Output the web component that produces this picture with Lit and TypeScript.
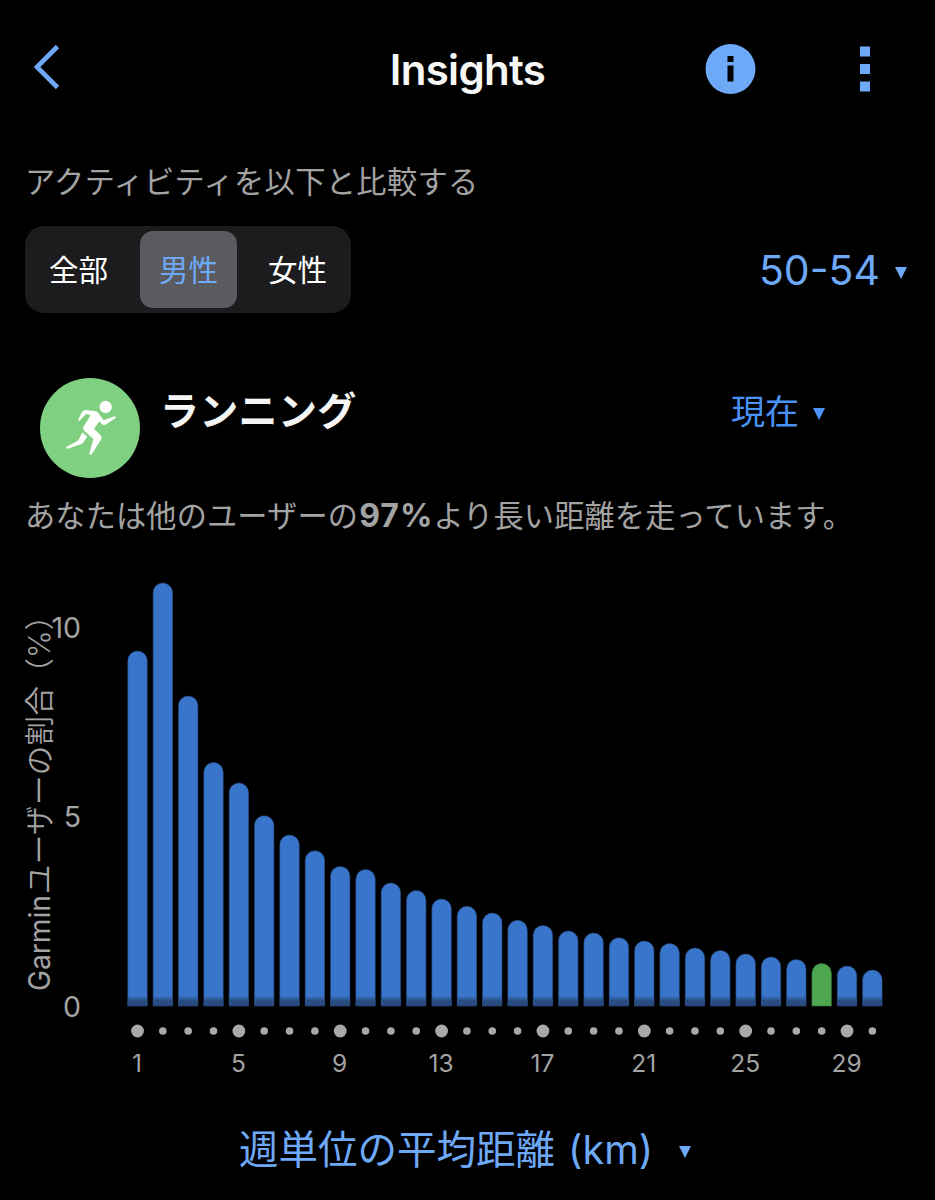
import { LitElement, html, svg, css } from "lit";
import { customElement, property, state } from "lit/decorators.js";

const BASELINE = 446;
const BAR_PITCH = 25.34;
const FIRST_BAR = 137.5;
const BAR_HEIGHTS = [
  355, 423, 310, 243.5, 223, 190.3, 171, 155.3, 139.5, 136.5, 123, 115.5, 107,
  99.7, 93, 85.7, 80.5, 75, 73, 68.3, 65, 62.5, 58, 55.5, 52, 49, 46.5, 42.5,
  40, 36,
];
const USER_BUCKET = 28;

@customElement("drop-caret")
class DropCaret extends LitElement {
  static styles = css`
    :host { display: block; }
    svg { display: block; }
  `;
  render() {
    return html`<svg width="12" height="12" viewBox="0 0 12 12">
      <path d="M0 0H12L6 12Z" fill="currentColor" />
    </svg>`;
  }
}

@customElement("distance-chart")
class DistanceChart extends LitElement {
  @property({ type: Array }) heights: number[] = [];
  @property({ type: Number }) highlight = 0;

  static styles = css`
    :host { display: block; }
    svg { display: block; font-family: Inter, "Noto Sans CJK JP", sans-serif; }
    .bar { fill: #3975cb; stroke: #2a4c80; stroke-width: 0.6; }
    .bar.mine { fill: #4fa650; stroke: #3b7a3c; }
    .dot { fill: #a9a9a9; }
    .tick { fill: #a3a3a3; font-size: 24.5px; text-anchor: middle; }
    .scale { fill: #a3a3a3; font-size: 28.5px; text-anchor: end; }
    .axis { fill: #a3a3a3; font-size: 29.5px; }
    .axis.light { font-weight: 350; }
  `;

  bar(h: number, i: number) {
    const x = FIRST_BAR + i * BAR_PITCH - 9.7;
    const y = BASELINE - h;
    const mine = i + 1 === this.highlight;
    return svg`
      <path class=${mine ? "bar mine" : "bar"}
        d="M${x} ${BASELINE}V${y + 9.7}a9.7 9.7 0 0 1 19.4 0V${BASELINE}Z" />
      ${mine ? null : svg`<rect x=${x} y=${BASELINE - 10} width="19.4" height="10" fill="url(#foot)" />`}`;
  }

  mark(i: number) {
    const x = FIRST_BAR + i * BAR_PITCH;
    const major = i % 4 === 0;
    return svg`
      <circle class="dot" cx=${x} cy="471" r=${major ? 6.4 : 3.8} />
      ${major ? svg`<text class="tick" x=${x - 0.5} y="512">${i + 1}</text>` : null}`;
  }

  render() {
    return html`<svg width="935" height="540" viewBox="0 0 935 540">
      <defs>
        <linearGradient id="foot" x1="0" y1="0" x2="0" y2="1">
          <stop offset="0" stop-color="#28497b" stop-opacity="0" />
          <stop offset="0.45" stop-color="#28497b" stop-opacity="0.9" />
          <stop offset="1" stop-color="#28497b" />
        </linearGradient>
      </defs>
      <text class="scale" x="81" y="77.5">10</text>
      <text class="scale" x="81" y="267">5</text>
      <text class="scale" x="81" y="456.5">0</text>
      <g transform="translate(50 431) rotate(-90)">
        <text class="axis" x="0" y="0" textLength="96" lengthAdjust="spacingAndGlyphs">Garmin</text>
        <text class="axis light" x="97" y="-0.5" textLength="208">ユーザーの割合</text>
        <text class="axis light" x="303.5" y="-0.5">（%）</text>
      </g>
      ${this.heights.map((h, i) => this.bar(h, i))}
      ${this.heights.map((_, i) => this.mark(i))}
    </svg>`;
  }
}

@customElement("app-root")
class AppRoot extends LitElement {
  @state() group = "男性";

  static styles = css`
    :host {
      display: block;
      box-sizing: border-box;
      width: 935px;
      height: 1200px;
      overflow: hidden;
      background: #000;
      color: #a3a3a3;
      font-family: Inter, "Noto Sans CJK JP", sans-serif;
      white-space: nowrap;
    }
    svg { display: block; }
    .header {
      display: grid;
      grid-template-columns: 235px 1fr 235px;
      height: 140px;
      box-sizing: border-box;
      padding: 0 0 2px;
      align-items: center;
    }
    .back { padding: 0 0 5px 32px; }
    .title {
      margin: 0;
      text-align: center;
      color: #f7f7f7;
      font-size: 42px;
      font-weight: 600;
      letter-spacing: -0.7px;
    }
    .actions { display: flex; align-items: center; gap: 104px; padding-left: 5px; }
    .compare { height: 86px; padding-left: 25px; font-size: 30.2px; letter-spacing: 0.4px; line-height: 84px; box-sizing: border-box; }
    .filters {
      display: flex;
      justify-content: space-between;
      align-items: center;
      height: 87px;
      padding: 0 28px 0 25px;
    }
    .segments {
      display: grid;
      grid-template-columns: 110px 107px 109px;
      box-sizing: border-box;
      width: 326px;
      height: 87px;
      border-radius: 19px;
      background: #1c1c1e;
      padding: 5px 0;
      color: #fff;
      font-size: 29.6px;
    }
    .segment { display: flex; align-items: center; justify-content: center; margin: 0 5px; padding-bottom: 3px; border-radius: 13px; }
    .segment:first-child { margin: 0 6px 0 3px; }
    .segment:last-child { margin: 0 4px 0 6px; }
    .segment.on { background: #5b5a5f; color: #6ea9f8; }
    .picker { display: flex; align-items: center; color: #6ea9f8; }
    .picker drop-caret { padding-top: 4px; }
    .age { font-size: 41px; gap: 15px; }
    .age drop-caret { padding-top: 6px; }
    .activity { display: flex; height: 100px; padding: 65px 0 0 40px; }
    .name { width: 571px; margin-left: 20px; color: #f5f5f5; font-size: 39px; font-weight: 700; letter-spacing: 0.3px; line-height: 66px; }
    .period { height: 68px; color: #4a93f6; font-size: 34px; gap: 14px; }
    .period span { padding-bottom: 6px; }
    .summary { height: 82px; padding-left: 25px; font-size: 30.2px; letter-spacing: 0.15px; line-height: 76px; box-sizing: border-box; }
    .summary b { font-weight: 700; font-size: 32px; letter-spacing: 1px; margin-left: 1px; }
    .unit { display: flex; height: 100px; padding: 0 0 0 239px; font-size: 39.5px; gap: 26px; box-sizing: border-box; }
    .unit span { padding-bottom: 8px; word-spacing: 2px; }
  `;

  render() {
    return html`
      <div class="header">
        <div class="back">
          <svg width="30" height="46" viewBox="0 0 30 46">
            <path d="M25.5 2.5L5 23L25.5 43.5" fill="none" stroke="#6ea9f8" stroke-width="4.6" />
          </svg>
        </div>
        <h1 class="title">Insights</h1>
        <div class="actions">
          <svg width="51" height="51" viewBox="0 0 51 51">
            <circle cx="25.5" cy="25" r="25" fill="#6ea9f8" />
            <path d="M22.5 12h6v6h-6zM22.5 21.5h6v16h-6z" fill="#000" />
          </svg>
          <svg width="10" height="46" viewBox="0 0 10 46">
            <path d="M0 .4h10v10H0zM0 17.9h10v10H0zM0 35.4h10v10H0z" fill="#6ea9f8" />
          </svg>
        </div>
      </div>
      <div class="compare">アクティビティを以下と比較する</div>
      <div class="filters">
        <div class="segments">
          ${["全部", "男性", "女性"].map(
            (g) => html`<div class="segment ${g === this.group ? "on" : ""}" @click=${() => (this.group = g)}>${g}</div>`
          )}
        </div>
        <div class="picker age"><span>50-54</span><drop-caret></drop-caret></div>
      </div>
      <div class="activity">
        <svg width="100" height="100" viewBox="0 0 300 300">
          <circle cx="150" cy="150" r="150" fill="#7fd181" />
          <g fill="#fff">
            <circle cx="197" cy="87" r="18.5" />
            <path d="M114 126L125 104Q129 97 136 96L165 99Q172 100 176 106L190 127L224 115Q229 115 227 120L196 140Q190 143 185 138L178 130L162 153L182 172Q187 178 184 184L156 227Q151 234 148 227L160 183L134 160Q126 153 132 144L152 111L138 108L121 126Q117 130 114 126Z" />
            <path d="M127 163L142 176L128 195Q126 198 122 199L83 212Q76 212 79 207L111 190Q116 187 118 181Z" />
          </g>
        </svg>
        <div class="name">ランニング</div>
        <div class="picker period"><span>現在</span><drop-caret></drop-caret></div>
      </div>
      <div class="summary">あなたは他のユーザーの<b>97%</b>より長い距離を走っています。</div>
      <distance-chart .heights=${BAR_HEIGHTS} .highlight=${USER_BUCKET}></distance-chart>
      <div class="picker unit"><span>週単位の平均距離 (km)</span><drop-caret></drop-caret></div>
    `;
  }
}
